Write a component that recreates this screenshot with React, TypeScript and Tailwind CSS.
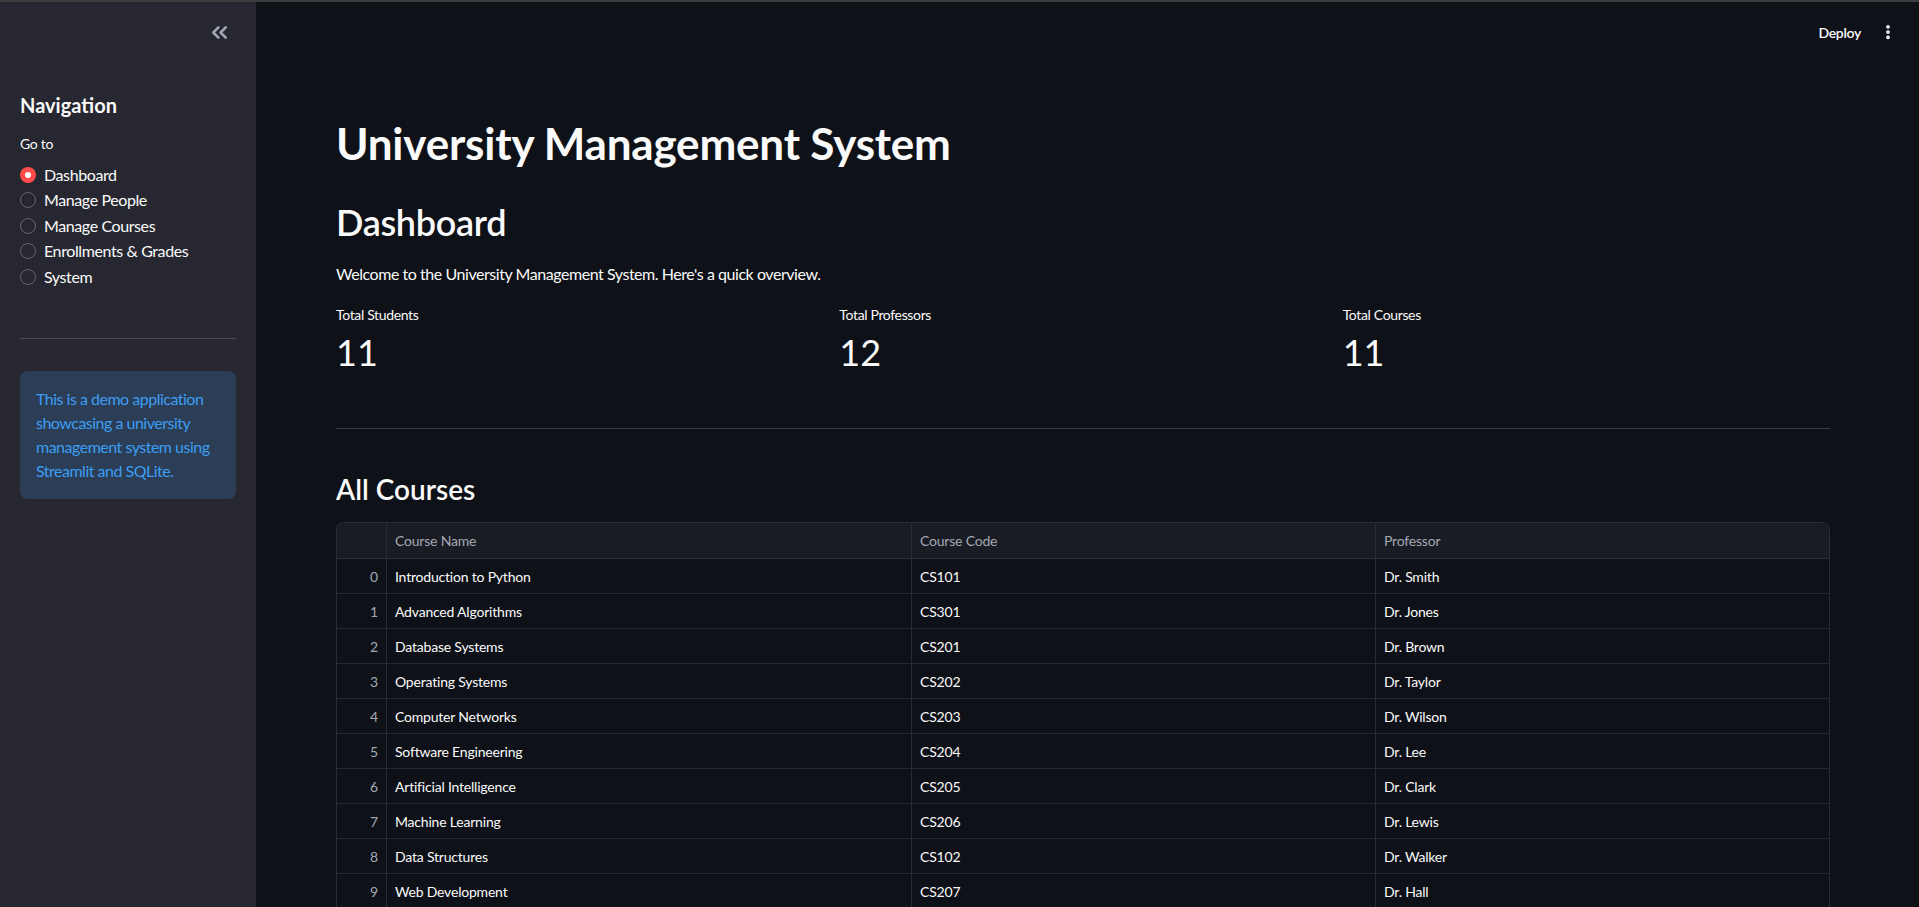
import React from 'react';
import { ChevronsLeft, EllipsisVertical } from 'lucide-react';

const navItems = ['Dashboard', 'Manage People', 'Manage Courses', 'Enrollments & Grades', 'System'];

const courses = [
    ['Introduction to Python', 'CS101', 'Dr. Smith'],
    ['Advanced Algorithms', 'CS301', 'Dr. Jones'],
    ['Database Systems', 'CS201', 'Dr. Brown'],
    ['Operating Systems', 'CS202', 'Dr. Taylor'],
    ['Computer Networks', 'CS203', 'Dr. Wilson'],
    ['Software Engineering', 'CS204', 'Dr. Lee'],
    ['Artificial Intelligence', 'CS205', 'Dr. Clark'],
    ['Machine Learning', 'CS206', 'Dr. Lewis'],
    ['Data Structures', 'CS102', 'Dr. Walker'],
    ['Web Development', 'CS207', 'Dr. Hall'],
];

const metrics = [
    { label: 'Total Students', value: '11' },
    { label: 'Total Professors', value: '12' },
    { label: 'Total Courses', value: '11' },
];

const Sidebar: React.FC = () => (
    <aside className="w-[256px] shrink-0 bg-[#262730] px-5 flex flex-col">
        <div className="flex justify-end pr-[4px] pt-[18px] h-[60px]">
            <ChevronsLeft size={25} strokeWidth={2.4} className="text-[#a3a8b4]" />
        </div>

        <h3 className="mt-[31px] text-[20px] leading-[24px] font-bold text-[#fafafa]">Navigation</h3>

        <div className="mt-[18px] text-[14px] leading-[18px] tracking-[-0.3px] text-[#fafafa]">Go to</div>

        {/* Radio group */}
        <div className="mt-[9px] flex flex-col">
            {navItems.map((item, i) => (
                <div key={item} className="flex items-center h-[25.5px] gap-[8px]">
                    {i === 0 ? (
                        <span className="w-4 h-4 rounded-full bg-[#ff4b4b] flex items-center justify-center">
                            <span className="w-[6px] h-[6px] rounded-full bg-white" />
                        </span>
                    ) : (
                        <span className="w-4 h-4 rounded-full border border-[#64656c]" />
                    )}
                    <span className="text-[16px] tracking-[-0.4px] text-[#fafafa]">{item}</span>
                </div>
            ))}
        </div>

        <div className="mt-[48px] border-t border-[#4b4c55]" />

        <div className="mt-[32px] rounded-lg bg-[#2b3e56] px-4 py-[16px] text-[16px] leading-[24px] tracking-[-0.5px] text-[#3d9df3]">
            This is a demo application showcasing a university management system using Streamlit and SQLite.
        </div>
    </aside>
);

const CoursesTable: React.FC = () => (
    <div className="rounded-t-lg border-x border-t border-[#2a2c33] overflow-hidden text-[14px] tracking-[-0.2px]">
        <div className="grid grid-cols-[50px_525px_464px_1fr] h-[36px] bg-[#1a1c24] border-b border-[#2e3038] text-[#a3a8b4]">
            <div className="border-r border-[#2a2c33]" />
            <div className="border-r border-[#2a2c33] px-2 flex items-center">Course Name</div>
            <div className="border-r border-[#2a2c33] px-2 flex items-center">Course Code</div>
            <div className="px-2 flex items-center">Professor</div>
        </div>
        {courses.map(([name, code, prof], i) => (
            <div key={code} className="grid grid-cols-[50px_525px_464px_1fr] h-[35px] border-b border-[#26282f] text-[#fafafa]">
                <div className="border-r border-[#2a2c33] px-2 flex items-center justify-end text-[#a3a8b4]">{i}</div>
                <div className="border-r border-[#2a2c33] px-2 flex items-center">{name}</div>
                <div className="border-r border-[#2a2c33] px-2 flex items-center">{code}</div>
                <div className="px-2 flex items-center">{prof}</div>
            </div>
        ))}
    </div>
);

export default function App() {
    return (
        <div className="h-screen w-full flex flex-col bg-[#0e1117] overflow-hidden" style={{ fontFamily: 'Lato, "Noto Sans", sans-serif' }}>
            <div className="h-[2px] bg-[#3d3d40] shrink-0" />
            <div className="flex flex-1 min-h-0">
                <Sidebar />

                <main className="flex-1 min-w-0 overflow-hidden flex flex-col">
                    {/* Header */}
                    <div className="h-[60px] shrink-0 flex items-center justify-end pr-[22px] gap-[18px] text-[#fafafa]">
                        <span className="text-[14px] font-semibold tracking-[-0.3px]">Deploy</span>
                        <EllipsisVertical size={18} strokeWidth={3} />
                    </div>

                    <div className="pl-20 pr-[89px]">
                        <h1 className="mt-[53px] text-[44px] leading-[56px] font-bold tracking-[-0.2px] text-[#fafafa]">University Management System</h1>

                        <h2 className="mt-[28px] text-[36px] leading-[46px] font-semibold tracking-[-0.3px] text-[#fafafa]">Dashboard</h2>

                        <p className="mt-[17px] text-[16px] leading-[24px] tracking-[-0.45px] text-[#fafafa]">
                            Welcome to the University Management System. Here's a quick overview.
                        </p>

                        <div className="mt-[20px] grid grid-cols-3 gap-4">
                            {metrics.map((m) => (
                                <div key={m.label} className="flex flex-col text-[#fafafa]">
                                    <span className="text-[14px] leading-[18px] tracking-[-0.35px]">{m.label}</span>
                                    <span className="mt-[8px] text-[36px] leading-[40px]">{m.value}</span>
                                </div>
                            ))}
                        </div>

                        <div className="mt-[56px] border-t border-[#3a3b42]" />

                        <h3 className="mt-[42px] text-[28px] leading-[36px] font-semibold text-[#fafafa]">All Courses</h3>

                        <div className="mt-[15px]">
                            <CoursesTable />
                        </div>
                    </div>
                </main>
            </div>
        </div>
    );
}
